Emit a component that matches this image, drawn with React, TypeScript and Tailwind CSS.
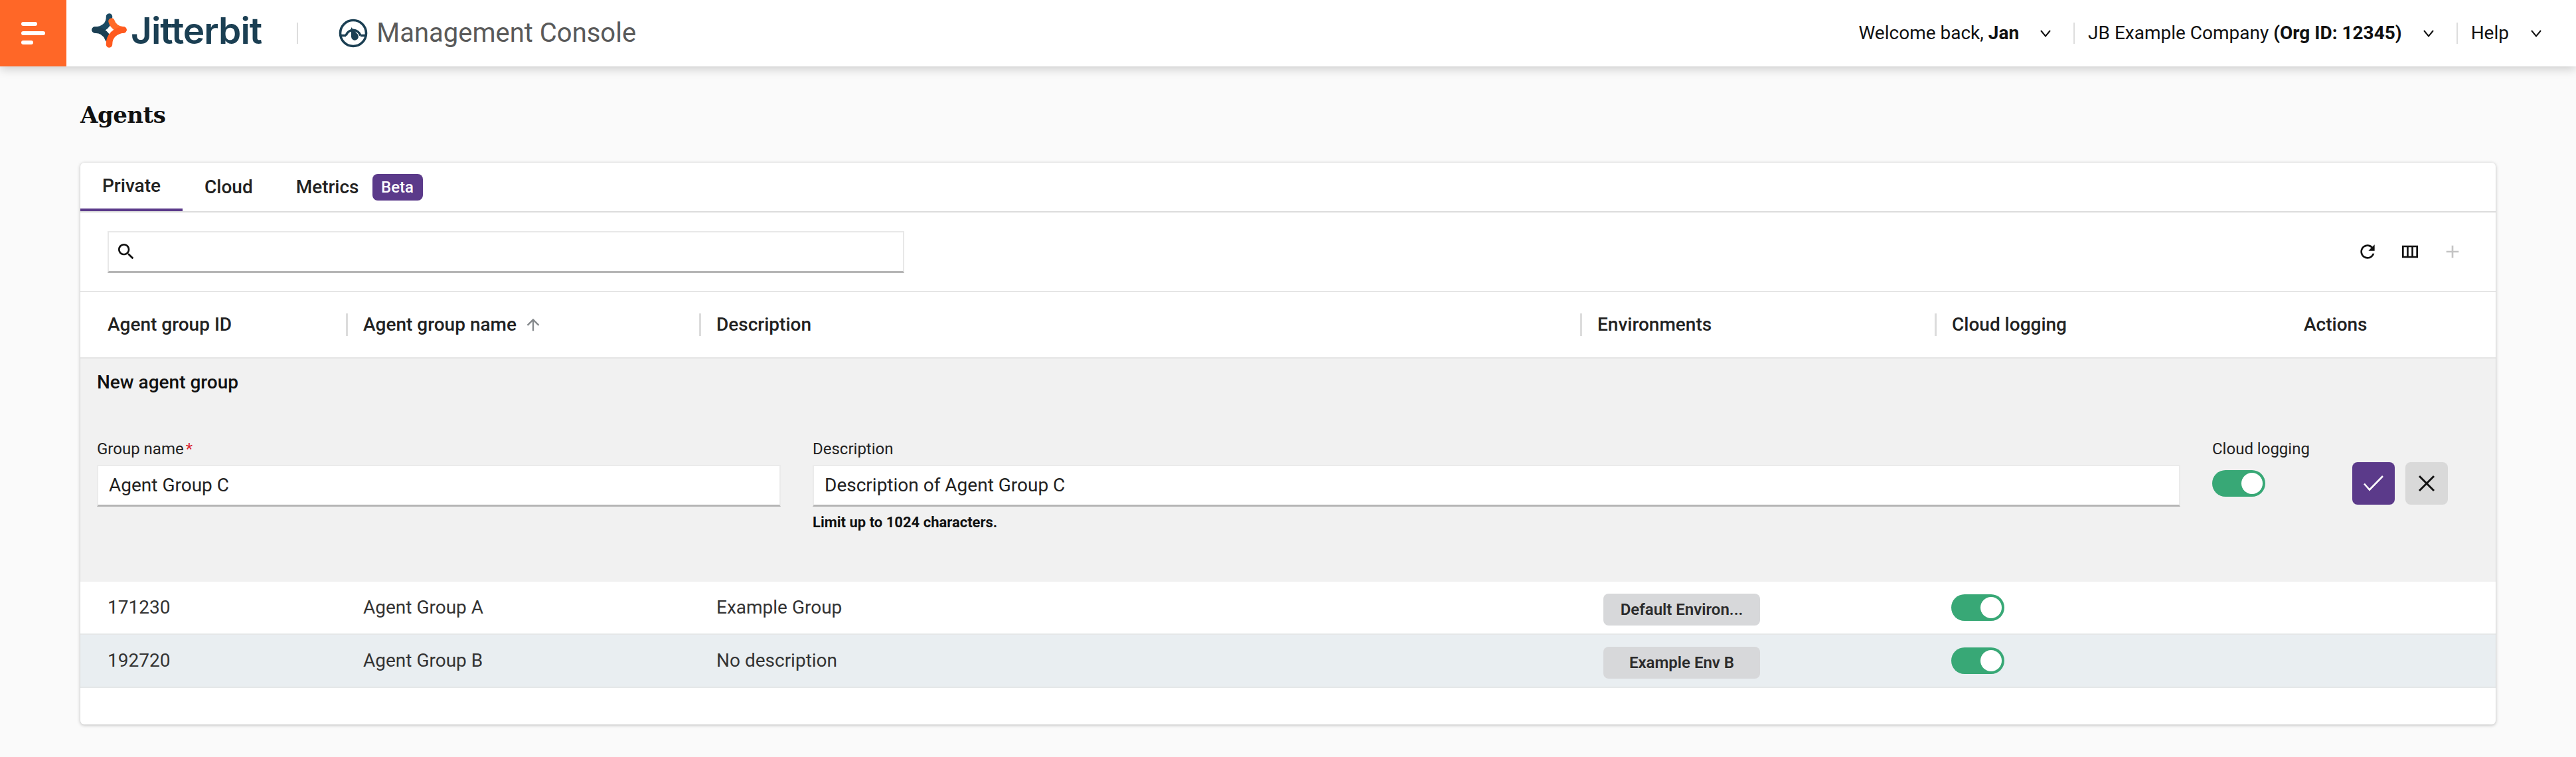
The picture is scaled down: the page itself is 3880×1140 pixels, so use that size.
import type { ReactNode } from "react";

const PLUS = "M19 13h-6v6h-2v-6H5v-2h6V5h2v6h6v2z";

function MaterialIcon({ d, className }: { d: string; className?: string }) {
  return (
    <svg viewBox="0 0 24 24" fill="currentColor" className={className}>
      <path d={d} />
    </svg>
  );
}

function Chevron() {
  return (
    <svg viewBox="0 0 16 12" fill="none" stroke="#111" strokeWidth="2" className="w-[16px] h-[12px]">
      <path d="M1 2l7 8.5L15 2" />
    </svg>
  );
}

function JitterbitMark() {
  return (
    <svg viewBox="0 0 70 66" fill="none" strokeLinecap="round" strokeWidth="9.5" className="w-[70px] h-[66px]">
      <path d="M34.5 12C35 24 26 32 13 32" stroke="#1b4a63" />
      <path d="M13 32C22 32 30 37 33 46" stroke="#1b3f53" />
      <path d="M38 19C40 26 47 32 56 32" stroke="#ff6a28" />
      <path d="M56 32C44 33 34 41 34.5 54" stroke="#ff5a1f" />
    </svg>
  );
}

function GaugeIcon() {
  return (
    <svg viewBox="0 0 44 44" fill="none" stroke="#1b3f53" strokeWidth="3.6" className="w-[44px] h-[44px]">
      <circle cx="22" cy="22" r="19.5" />
      <path d="M3 25.5h8M33 25.5h8M11 25.5a11.5 11.5 0 0 1 22 0" />
      <path d="M19 13 29 24a5.5 5.5 0 1 1-10 3.5z" fill="#1b3f53" stroke="none" />
    </svg>
  );
}

function Toggle() {
  return (
    <div className="w-[80px] h-[40px] rounded-full bg-[#38a876] flex items-center justify-end pr-[4px]">
      <div className="w-[32px] h-[32px] rounded-full bg-white" />
    </div>
  );
}

function NavDivider() {
  return <div className="w-[2px] h-[32px] bg-[#dddddd]" />;
}

function HeaderCell({ label, first }: { label: string; first?: boolean }) {
  return (
    <div className={`flex items-center h-[34px] font-medium text-[28px] text-[#222] ${first ? "" : "border-l-[3px] border-[#dcdcdc] pl-[23px]"}`}>
      {label}
    </div>
  );
}

function Field({
  label,
  value,
  required,
  className,
  children,
}: {
  label: string;
  value: string;
  required?: boolean;
  className: string;
  children?: ReactNode;
}) {
  return (
    <div className={className}>
      <label className="block text-[24px] leading-[28px] text-[#222] mb-[10px]">
        {label}
        {required && <span className="text-[#d9232e] ml-[3px]">*</span>}
      </label>
      <div className="h-[63px] bg-white border-2 border-[#ebebeb] border-b-[3px] border-b-[#b5b5b5] flex items-center pl-[16px] text-[28px] text-[#222]">
        {value}
      </div>
      {children}
    </div>
  );
}

function AgentRow({
  id,
  name,
  description,
  env,
  shaded,
}: {
  id: string;
  name: string;
  description: string;
  env: string;
  shaded?: boolean;
}) {
  return (
    <div className={`grid grid-cols-[400px_532px_1327px_534px_1fr] items-center h-[80px] border-b-2 border-[#e5e7e8] text-[28px] text-[#333] ${shaded ? "bg-[#e9eef1]" : "bg-white"}`}>
      <div className="pl-[41px]">{id}</div>
      <div className="pl-[26px]">{name}</div>
      <div className="pl-[26px]">{description}</div>
      <div className="pl-[35px] pt-[6px]">
        <div className="w-[236px] h-[48px] rounded-[8px] bg-[#d7d8da] flex items-center justify-center text-[24px] font-semibold text-[#2b2b2b]">
          {env}
        </div>
      </div>
      <div className="pl-[25px]">
        <Toggle />
      </div>
    </div>
  );
}

export default function App() {
  return (
    <div className="min-h-[1140px] bg-[#fafafa] font-['Roboto',sans-serif] text-[#111]">
      {/* Top bar */}
      <header className="h-[100px] bg-white shadow-[0_4px_14px_rgba(0,0,0,0.18)] flex items-center relative">
        <div className="w-[100px] h-[100px] bg-[#ff6727] flex flex-col gap-[8px] justify-center pl-[32px]">
          <div className="w-[24px] h-[6px] rounded-full bg-white" />
          <div className="w-[36px] h-[6px] rounded-full bg-white" />
          <div className="w-[18px] h-[6px] rounded-full bg-white" />
        </div>
        <div className="ml-[30px] flex items-center mb-[8px]">
          <JitterbitMark />
          <span className="font-['Inter',sans-serif] font-semibold text-[55px] leading-none tracking-[-1px] text-[#1b3f53] -ml-[3px]">
            Jitterbit
          </span>
        </div>
        <div className="ml-[53px]">
          <NavDivider />
        </div>
        <div className="ml-[61px]">
          <GaugeIcon />
        </div>
        <span className="ml-[13px] text-[40px] text-[#5a5a5a]">Management Console</span>

        <div className="ml-auto pr-[52px] flex items-center text-[28px] text-[#111]">
          <span>
            Welcome back, <b className="font-bold">Jan</b>
          </span>
          <div className="ml-[32px] mr-[34px]">
            <Chevron />
          </div>
          <NavDivider />
          <span className="ml-[20px]">
            JB Example Company <b className="font-bold">(Org ID: 12345)</b>
          </span>
          <div className="ml-[32px] mr-[34px]">
            <Chevron />
          </div>
          <NavDivider />
          <span className="ml-[20px]">Help</span>
          <div className="ml-[33px]">
            <Chevron />
          </div>
        </div>
      </header>

      <main className="pl-[121px] pr-[121px]">
        <h1 className="font-['DejaVu_Serif',serif] font-bold text-[34px] tracking-[-0.5px] leading-[40px] mt-[53px] text-[#111]">Agents</h1>

        <section className="mt-[52px] h-[846px] bg-white rounded-[6px] shadow-[0_1px_5px_rgba(0,0,0,0.28)] overflow-hidden">
          {/* Tabs */}
          <div className="h-[75px] border-b-2 border-[#dcdcdc] flex items-stretch text-[28px] font-medium text-[#222]">
            <div className="w-[154px] flex items-center justify-center border-b-4 border-[#5b3a8a] h-[73px]">Private</div>
            <div className="ml-[33px] flex items-center">Cloud</div>
            <div className="ml-[65px] flex items-center">Metrics</div>
            <div className="ml-[20px] flex items-center">
              <span className="w-[76px] h-[40px] rounded-[8px] bg-[#5b3a8a] text-white text-[24px] flex items-center justify-center">Beta</span>
            </div>
          </div>

          {/* Search toolbar */}
          <div className="h-[118px] flex items-center pl-[41px] pr-[49px]">
            <div className="w-[1200px] h-[63px] border-2 border-[#e8e8e8] border-b-[3px] border-b-[#b5b5b5] flex items-center pl-[10px]">
              <MaterialIcon
                className="w-[32px] h-[32px] text-[#111]"
                d="M15.5 14h-.79l-.28-.27C15.41 12.59 16 11.11 16 9.5 16 5.91 13.09 3 9.5 3S3 5.91 3 9.5 5.91 16 9.5 16c1.61 0 3.09-.59 4.23-1.57l.27.28v.79l5 4.99L20.49 19l-4.99-5zm-6 0C7.01 14 5 11.99 5 9.5S7.01 5 9.5 5 14 7.01 14 9.5 11.99 14 9.5 14z"
              />
            </div>
            <div className="ml-auto flex items-center gap-[32px]">
              <MaterialIcon
                className="w-[32px] h-[32px] text-[#111]"
                d="M17.65 6.35C16.2 4.9 14.21 4 12 4c-4.42 0-7.99 3.58-7.99 8s3.57 8 7.99 8c3.73 0 6.84-2.55 7.73-6h-2.08c-.82 2.33-3.04 4-5.65 4-3.31 0-6-2.69-6-6s2.69-6 6-6c1.66 0 3.14.69 4.22 1.78L13 11h7V4l-2.35 2.35z"
              />
              <MaterialIcon
                className="w-[32px] h-[32px] text-[#111]"
                d="M3 5v14h18V5H3zm5.33 12H5V7h3.33v10zm5.34 0h-3.33V7h3.33v10zM19 17h-3.33V7H19v10z"
              />
              <MaterialIcon className="w-[32px] h-[32px] text-[#c4c4c4]" d={PLUS} />
            </div>
          </div>

          {/* Column headers */}
          <div className="h-[102px] border-t-2 border-b-2 border-[#e5e5e5] grid grid-cols-[400px_532px_1327px_534px_531px_1fr] items-center">
            <div className="pl-[41px]">
              <HeaderCell label="Agent group ID" first />
            </div>
            <div className="flex items-center">
              <HeaderCell label="Agent group name" />
              <MaterialIcon className="w-[28px] h-[28px] ml-[11px] text-[#85898c]" d="M4 12l1.41 1.41L11 7.83V20h2V7.83l5.58 5.59L20 12l-8-8-8 8z" />
            </div>
            <HeaderCell label="Description" />
            <HeaderCell label="Environments" />
            <HeaderCell label="Cloud logging" />
            <div className="ml-[25px] font-medium text-[28px] text-[#222]">Actions</div>
          </div>

          {/* New agent group form */}
          <div className="h-[336px] bg-[#f1f1f1] pl-[25px] relative">
            <h2 className="pt-[20px] font-medium text-[28px] leading-[32px] text-[#111]">New agent group</h2>
            <div className="mt-[70px] flex items-start">
              <Field label="Group name" value="Agent Group C" required className="w-[1030px]" />
              <Field label="Description" value="Description of Agent Group C" className="ml-[48px] w-[2060px]">
                <p className="mt-[12px] text-[22px] leading-[24px] font-bold text-[#111]">Limit up to 1024 characters.</p>
              </Field>
              <div className="ml-[48px]">
                <div className="text-[24px] leading-[28px] text-[#222] mb-[18px]">Cloud logging</div>
                <Toggle />
              </div>
              <div className="ml-[64px] mt-[34px] flex gap-[16px]">
                <button className="w-[64px] h-[64px] rounded-[8px] bg-[#5b3a8a] flex items-center justify-center">
                  <svg viewBox="0 0 32 32" fill="none" stroke="#fff" strokeWidth="2.6" className="w-[32px] h-[32px]">
                    <path d="M2 16.5l8 9L30 5" />
                  </svg>
                </button>
                <button className="w-[64px] h-[64px] rounded-[8px] bg-[#d9d9d9] flex items-center justify-center">
                  <svg viewBox="0 0 32 32" fill="none" stroke="#111" strokeWidth="3" className="w-[32px] h-[32px]">
                    <path d="M5 5l22 22M27 5 5 27" />
                  </svg>
                </button>
              </div>
            </div>
          </div>

          <AgentRow id="171230" name="Agent Group A" description="Example Group" env="Default Environ..." />
          <AgentRow id="192720" name="Agent Group B" description="No description" env="Example Env B" shaded />
        </section>
      </main>
    </div>
  );
}
